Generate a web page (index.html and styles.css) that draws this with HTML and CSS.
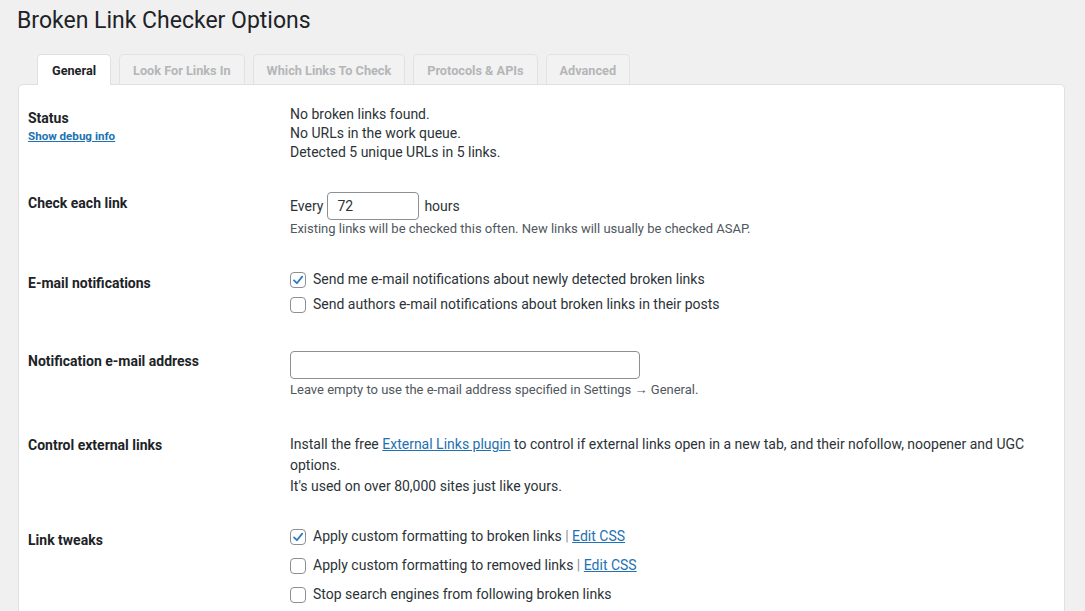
FILE: index.html
```html
<!DOCTYPE html>
<html lang="en">
<head>
<meta charset="utf-8">
<title>Broken Link Checker Options</title>
<link rel="stylesheet" href="styles.css">
</head>
<body>
<div class="wrap">
  <h1 class="title">Broken Link Checker Options</h1>
  <nav class="tabs">
    <span class="tab tab-active">General</span>
    <span class="tab">Look For Links In</span>
    <span class="tab">Which Links To Check</span>
    <span class="tab">Protocols &amp; APIs</span>
    <span class="tab">Advanced</span>
  </nav>
  <div class="card">
    <div class="row row-status">
      <div class="label">
        <div>Status</div>
        <a class="debug-link" href="#">Show debug info</a>
      </div>
      <div class="value">
        <div>No broken links found.</div>
        <div>No URLs in the work queue.</div>
        <div>Detected 5 unique URLs in 5 links.</div>
      </div>
    </div>

    <div class="row row-check">
      <div class="label">Check each link</div>
      <div class="value">
        <div class="inline-field">
          <span>Every</span>
          <input class="text-input hours-input" type="text" value="72">
          <span>hours</span>
        </div>
        <div class="help">Existing links will be checked this often. New links will usually be checked ASAP.</div>
      </div>
    </div>

    <div class="row row-email">
      <div class="label">E-mail notifications</div>
      <div class="value checks">
        <label class="check-line"><span class="box checked"><svg viewBox="0 0 16 16" width="16" height="16"><path d="M4 8.4 L6.9 11.2 L12.2 4.6" fill="none" stroke="#2f7bbf" stroke-width="1.8" stroke-linecap="round" stroke-linejoin="round"/></svg></span><span class="check-text">Send me e-mail notifications about newly detected broken links</span></label>
        <label class="check-line"><span class="box"></span><span class="check-text">Send authors e-mail notifications about broken links in their posts</span></label>
      </div>
    </div>

    <div class="row row-address">
      <div class="label">Notification e-mail address</div>
      <div class="value">
        <input class="text-input email-input" type="text" value="">
        <div class="help help-after">Leave empty to use the e-mail address specified in Settings → General.</div>
      </div>
    </div>

    <div class="row row-external">
      <div class="label">Control external links</div>
      <div class="value para">
        <p class="para-line">Install the free <a class="link" href="#">External Links plugin</a> to control if external links open in a new tab, and their nofollow, noopener and UGC options.</p>
        <p class="para-line">It's used on over 80,000 sites just like yours.</p>
      </div>
    </div>

    <div class="row row-tweaks">
      <div class="label">Link tweaks</div>
      <div class="value checks tweaks">
        <label class="check-line"><span class="box checked"><svg viewBox="0 0 16 16" width="16" height="16"><path d="M4 8.4 L6.9 11.2 L12.2 4.6" fill="none" stroke="#2f7bbf" stroke-width="1.8" stroke-linecap="round" stroke-linejoin="round"/></svg></span><span class="check-text">Apply custom formatting to broken links <span class="sep">|</span> <a class="link" href="#">Edit CSS</a></span></label>
        <label class="check-line"><span class="box"></span><span class="check-text">Apply custom formatting to removed links <span class="sep">|</span> <a class="link" href="#">Edit CSS</a></span></label>
        <label class="check-line"><span class="box"></span><span class="check-text">Stop search engines from following broken links</span></label>
      </div>
    </div>
  </div>
</div>
</body>
</html>
```
FILE: styles.css
```css
html, body {
  margin: 0;
  padding: 0;
  background: #f0f0f0;
  font-family: Roboto, "Liberation Sans", Arial, sans-serif;
  color: #2c3338;
  font-size: 14px;
  overflow: hidden;
  height: 611px;
}

.wrap {
  padding: 0 20px 0 18px;
}

.title {
  margin: 0;
  padding: 7px 0 0 0;
  font-size: 23px;
  line-height: 28px;
  font-weight: 400;
  color: #1d2327;
  margin-left: -1px;
}

.tabs {
  display: flex;
  gap: 8px;
  padding-left: 19px;
  margin-top: 19px;
  position: relative;
  z-index: 1;
}

.tab {
  height: 29px;
  line-height: 31px;
  padding: 0 13px;
  font-size: 12.7px;
  font-weight: 700;
  color: #b4b6b8;
  background: #f2f2f2;
  border: 1px solid #e2e2e2;
  border-bottom: none;
  border-radius: 5px 5px 0 0;
  box-sizing: content-box;
}

.tab-active {
  background: #ffffff;
  color: #1d2327;
  border-color: #e0e0e0;
  height: 30px;
  margin-bottom: -1px;
  padding: 0 14px;
}

.card {
  background: #ffffff;
  border: 1px solid #e0e0e0;
  border-radius: 5px;
  padding: 0 9px;
  min-height: 600px;
}

.row {
  display: grid;
  grid-template-columns: 262px 1fr;
}

.label {
  font-weight: 700;
  color: #1d2327;
  line-height: 19px;
}

.value {
  line-height: 19px;
}

.debug-link {
  display: block;
  font-size: 11.6px;
  line-height: 14px;
  margin-top: 1px;
  color: #2271b1;
  text-decoration: underline;
}

.row-status .label { padding-top: 24px; }
.row-status .value { padding-top: 20px; }

.row-check .label { padding-top: 32px; }
.row-check .value { padding-top: 30px; }

.inline-field {
  display: flex;
  align-items: center;
  gap: 4px;
  height: 28px;
}

.text-input {
  box-sizing: border-box;
  height: 28px;
  border: 1px solid #8c8f94;
  border-radius: 4px;
  font-family: inherit;
  font-size: 14px;
  color: #2c3338;
  padding: 0 9px;
  margin: 0;
  background: #fff;
}

.hours-input {
  width: 92px;
  margin-right: 1px;
}

.help {
  font-size: 13px;
  line-height: 18px;
  color: #50575e;
}

.help-after {
  margin-top: 2px;
}

.row-email .label { padding-top: 36px; }
.row-email .value { padding-top: 29px; }

.checks {
  display: flex;
  flex-direction: column;
}

.check-line {
  display: flex;
  align-items: center;
  height: 25px;
  white-space: nowrap;
}

.tweaks .check-line {
  height: 29px;
}

.box {
  box-sizing: border-box;
  width: 16px;
  height: 16px;
  border: 1px solid #8c8f94;
  border-radius: 4px;
  background: #fff;
  margin-right: 7px;
  position: relative;
  flex: none;
}

.box svg {
  position: absolute;
  left: -1px;
  top: -1px;
}

.row-address .label { padding-top: 35px; }
.row-address .value { padding-top: 34px; }

.email-input {
  width: 350px;
  display: block;
}

.row-external .label { padding-top: 37px; }
.row-external .value { padding-top: 35px; }

.para {
  line-height: 21px;
  padding-right: 10px;
}

.para-line {
  margin: 0;
}

.link {
  color: #2271b1;
  text-decoration: underline;
}

.sep {
  color: #8c8f94;
}

.row-tweaks .label { padding-top: 34px; }
.row-tweaks .value { padding-top: 25px; }
```
